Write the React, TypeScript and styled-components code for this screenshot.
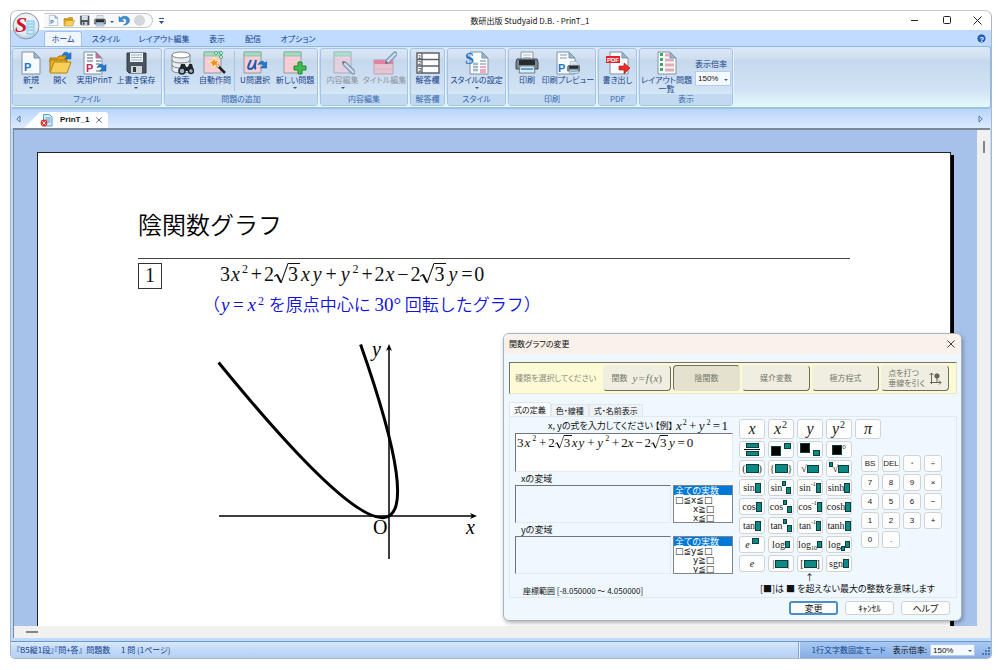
import React from "react";
import styled, { createGlobalStyle, css } from "styled-components";

const ui = `"Noto Sans CJK JP", "Liberation Sans", sans-serif`;
const serif = `"Liberation Serif", "Noto Sans CJK JP", serif`;

const GlobalStyle = createGlobalStyle`
  *, *::before, *::after { box-sizing: border-box; }
  body {
    margin: 0;
    background: #fff;
    color: #111;
    font-family: ${ui};
    font-size: 9px;
    line-height: 12px;
  }
  button, input, select, textarea { font: inherit; color: inherit; margin: 0; }
  button { padding: 0; border: 0; background: none; }
`;

/* ---------- window frame ---------- */

const Screen = styled.div`
  min-height: 100vh;
  padding: 10px 8px 11px 10px;
  display: flex;
`;

const Window = styled.div`
  position: relative;
  flex: 1;
  min-width: 0;
  display: flex;
  flex-direction: column;
  border: 1px solid #a9b6c8;
  border-top-color: #c9c9c9;
  border-radius: 7px 7px 5px 5px;
  overflow: hidden;
  background: #bfdbff;
  font-feature-settings: "palt";
`;

const TitleBar = styled.header`
  height: 19px;
  display: flex;
  align-items: center;
  justify-content: space-between;
  background: #fff;
  padding: 0 9px 0 33px;
`;

const QuickBar = styled.div`
  display: flex;
  align-items: center;
  width: 109px;
  height: 15px;
  gap: 4px;
  padding-left: 4px;
  border: 1px solid #c4c8ce;
  border-left: 0;
  border-radius: 0 8px 8px 0;
  background: #f7f9fb;
`;

const TitleSide = styled.div`
  flex: 1 0 34px;
  display: flex;
  align-items: center;
  gap: 6px;
`;

const WindowControls = styled(TitleSide)`
  flex-basis: 0;
  justify-content: flex-end;
  gap: 20px;
`;

const PlainButton = styled.button`
  display: flex;
  align-items: center;
  justify-content: center;
`;

const WindowTitle = styled.h1`
  margin: 0;
  font-size: 8px;
  line-height: 12px;
  font-weight: 400;
  color: #111;
`;

const Orb = styled.button`
  position: absolute;
  left: 1px;
  top: 1px;
  width: 28px;
  height: 28px;
  z-index: 2;
`;

const MenuBar = styled.nav`
  height: 16px;
  display: flex;
  align-items: flex-end;
  padding: 0 4px 0 33px;
  color: #15428b;
`;

const MenuTab = styled.button<{ $active?: boolean; $w: number }>`
  width: ${(p) => p.$w}px;
  height: 15px;
  font-size: 8px;
  line-height: 14px;
  color: #15428b;
  border-radius: 3px 3px 0 0;
  ${(p) =>
    p.$active &&
    css`
      background: #eff6fe;
      border: 1px solid #9fc3ee;
      border-bottom: 0;
    `}
`;

const HelpButton = styled(PlainButton)`
  margin-left: auto;
  height: 15px;
`;

/* ---------- ribbon ---------- */

const Ribbon = styled.div`
  display: flex;
  gap: 2px;
  height: 63px;
  margin-left: 1px;
  padding: 1px 0;
  border: 1px solid #8db9e8;
  border-width: 1px 1px 2px 0;
  border-bottom-color: #9cc4d8;
  border-radius: 0 3px 3px 0;
  background: linear-gradient(#dbe8f7 0, #d0dff1 11px, #c6d8ec 13px, #d0e2f4 42px, #e2f9fd 100%);
`;

const GroupBox = styled.section<{ $w: number }>`
  width: ${(p) => p.$w}px;
  display: flex;
  flex-direction: column;
  border: 1px solid #a5c3e4;
  border-radius: 3px;
  overflow: hidden;
  box-shadow: 1px 0 0 #e9f3fd;
`;

const GroupItems = styled.div`
  flex: 1;
  display: flex;
  justify-content: center;
  align-items: flex-start;
  padding-top: 2px;
`;

const GroupCaption = styled.h2`
  margin: 0;
  height: 11px;
  font-size: 8px;
  line-height: 10px;
  font-weight: 400;
  text-align: center;
  color: #3a68ae;
  background: #c1d9f1;
`;

const RibbonItem = styled.button<{ $w: number; $dim?: boolean }>`
  width: ${(p) => p.$w}px;
  display: flex;
  flex-direction: column;
  align-items: center;
  font-size: 8px;
  line-height: 9px;
  white-space: nowrap;
  color: ${(p) => (p.$dim ? "#8b939f" : "#15428b")};
  svg.icon { width: 24px; height: 24px; opacity: ${(p) => (p.$dim ? 0.7 : 1)}; }
`;

const Caret = styled.span`
  width: 0;
  height: 0;
  margin-top: 3px;
  border: 2px solid transparent;
  border-top-color: #35558c;
  border-bottom: 0;
`;

const Separator = styled.span`
  width: 1px;
  height: 40px;
  background: #eef5fd;
  border-left: 1px solid #a9c5e2;
`;

const ZoomField = styled.label`
  display: flex;
  flex-direction: column;
  gap: 1px;
  padding: 7px 0 0 3px;
  font-size: 8px;
  color: #15428b;
`;

const SelectWrap = styled.span<{ $w: number; $h: number }>`
  position: relative;
  display: block;
  width: ${(p) => p.$w}px;
  height: ${(p) => p.$h}px;
  &::after {
    content: "";
    position: absolute;
    right: 3px;
    top: 50%;
    border: 2px solid transparent;
    border-top-color: #3a63a5;
    border-bottom: 0;
  }
`;

const ZoomSelect = styled.select`
  appearance: none;
  width: 100%;
  height: 100%;
  display: block;
  padding: 0 0 0 2px;
  border: 1px solid #b3cdec;
  border-radius: 0;
  background: #f4f9ff;
  font-family: "Liberation Sans", sans-serif;
  font-size: 8px;
  color: #111;
`;

/* ---------- document tabs ---------- */

const DocTabs = styled.div`
  height: 19px;
  display: flex;
  align-items: flex-end;
  justify-content: space-between;
  padding: 0 7px 0 3px;
  background: linear-gradient(#b9d5fc, #dceafd);
`;

const DocTabGroup = styled.div`
  display: flex;
  align-items: flex-end;
`;

const Scroller = styled(PlainButton)`
  width: 8px;
  height: 18px;
`;

const DocTab = styled.div`
  width: 84px;
  height: 16px;
  margin-left: 2px;
  display: flex;
  align-items: center;
  padding: 0 5px 0 16px;
  gap: 7px;
  background: #fdfeff;
  clip-path: polygon(0 100%, 16px 0, 82px 0, 100% 2px, 100% 100%);
  font-size: 8px;
  font-weight: 700;
  font-family: "Liberation Sans", sans-serif;
`;

/* ---------- workspace ---------- */

const Workspace = styled.main`
  position: relative;
  flex: 1;
  display: grid;
  grid-template-columns: minmax(0, 1fr) 13px;
  grid-template-rows: 1fr 12px;
  margin: 0 1px 3px 2px;
  border: 1px solid #7d8795;
  border-width: 2px 0 0 1px;
`;

const Canvas = styled.div`
  display: flex;
  padding: 22px 26px 0 23px;
  background: #a6c1ea;
  overflow: hidden;
`;

const Paper = styled.article`
  flex: 1;
  min-width: 0;
  padding: 53px 100px 0 100px;
  border: 1px solid #222;
  border-bottom: 0;
  background: #fff;
  box-shadow: 3px 3px 0 #000;
`;

const VScroll = styled.div`
  background: #f0f0f0;
  padding-top: 11px;
  display: flex;
  justify-content: center;
  align-items: flex-start;
  &::before { content: ""; width: 2px; height: 12px; background: #858585; }
`;

const HScroll = styled.div`
  grid-column: 1 / -1;
  background: #f0f0f0;
  padding: 5px 12px;
  &::before { content: ""; display: block; width: 12px; height: 2px; background: #858585; }
`;

const PaperTitle = styled.h2`
  margin: 0;
  padding-bottom: 17px;
  border-bottom: 1px solid #444;
  font-size: 24px;
  line-height: 35px;
  font-weight: 350;
  color: #000;
  font-feature-settings: normal;
`;

const Problem = styled.section`
  display: flex;
  align-items: flex-start;
  padding-top: 4px;
`;

const ProblemNumber = styled.span`
  width: 24px;
  height: 26px;
  border: 1px solid #333;
  font: 20px/23px ${serif};
  text-align: center;
`;

const ProblemBody = styled.div`
  flex: 1;
  min-width: 0;
  padding-left: 58px;
`;

const Note = styled.p`
  margin: 9px 0 0 -17px;
  display: flex;
  align-items: center;
  color: #1010e0;
  font-size: 17px;
  line-height: 22px;
  white-space: pre;
  font-weight: 350;
  font-feature-settings: normal;
`;

const Graph = styled.svg`
  display: block;
  width: 262px;
  height: 228px;
  margin: 20px 0 0 -3px;
  font-family: ${serif};
`;

/* ---------- mathematics ---------- */

const MathRow = styled.span<{ $size: number }>`
  display: inline-flex;
  align-items: center;
  font-family: ${serif};
  font-size: ${(p) => p.$size}px;
  line-height: ${(p) => p.$size}px;
  font-weight: 400;
  white-space: nowrap;
`;

const Var = styled.i<{ $gap?: number }>`
  padding: 0 ${(p) => p.$gap ?? 1}px;
`;

const Sup = styled.span<{ $size: number }>`
  font-size: ${(p) => p.$size}px;
  line-height: ${(p) => p.$size}px;
  align-self: flex-start;
  font-style: normal;
  padding: 0 1px;
`;

const Op = styled.span<{ $w: number }>`
  width: ${(p) => p.$w}px;
  display: flex;
  justify-content: center;
`;

const RootBox = styled.span`
  display: inline-flex;
  align-items: stretch;
  svg { flex: none; }
`;

const Radicand = styled.span<{ $w: number }>`
  width: ${(p) => p.$w}px;
  border-top: 1px solid currentColor;
`;

const Root = ({ size, children }: { size: number; children: React.ReactNode }) => {
  const w = Math.round(size * 0.7);
  return (
    <RootBox>
      <svg width={w} height={size + 1} viewBox="0 0 14 20" preserveAspectRatio="none" fill="none" stroke="currentColor">
        <path d="M0 13 L3 11" strokeWidth="1" />
        <path d="M3 11 L7 18.5" strokeWidth="2" />
        <path d="M7 19 L14 .5" strokeWidth="1" />
      </svg>
      <Radicand $w={Math.round(size * 0.6)}>{children}</Radicand>
    </RootBox>
  );
};

const Equation = ({ size, op, gap }: { size: number; op: number; gap: number }) => {
  const sup = Math.round(size * 0.6);
  return (
    <MathRow $size={size}>
      3<Var>x</Var>
      <Sup $size={sup}>2</Sup>
      <Op $w={op}>+</Op>2<Root size={size}>3</Root>
      <Var $gap={gap - 1}>x</Var>
      <Var $gap={gap}>y</Var>
      <Op $w={op}>+</Op>
      <Var $gap={gap}>y</Var>
      <Sup $size={sup}>2</Sup>
      <Op $w={op}>+</Op>2<Var $gap={gap - 1}>x</Var>
      <Op $w={op}>−</Op>2<Root size={size}>3</Root>
      <Var $gap={gap}>y</Var>
      <Op $w={op}>=</Op>0
    </MathRow>
  );
};

/* ---------- dialog ---------- */

const Dialog = styled.section`
  position: absolute;
  right: 28px;
  bottom: 17px;
  width: 459px;
  border: 1px solid #a9b4c2;
  border-radius: 6px;
  background: #f0f8ff;
  box-shadow: 1px 2px 4px rgba(0, 0, 0, 0.3);
  padding-bottom: 5px;
  overflow: hidden;
  color: #111;
`;

const DialogHead = styled.header`
  display: flex;
  align-items: center;
  justify-content: space-between;
  height: 20px;
  padding: 0 6px 0 5px;
  background: #faf1ea;
`;

const DialogTitle = styled.h2`
  margin: 0;
  font-size: 8px;
  line-height: 12px;
  font-weight: 400;
`;

const ModeBar = styled.div`
  display: flex;
  align-items: center;
  gap: 2px;
  height: 32px;
  margin: 8px 4px 0 5px;
  padding: 0 7px 0 5px;
  border: 1px solid #e9e7c8;
  border-top: 1px solid #73736b;
  border-left: 1px solid #73736b;
  background: #fdfbd6;
  color: #8c8c80;
`;

const ModeLabel = styled.span`
  width: 86px;
  font-size: 8px;
  white-space: nowrap;
`;

const ModeButton = styled.button<{ $on?: boolean }>`
  flex: 1;
  height: 26px;
  display: flex;
  align-items: center;
  justify-content: center;
  gap: 4px;
  border-radius: 4px;
  font-size: 8px;
  line-height: 10px;
  text-align: left;
  white-space: nowrap;
  color: #77776c;
  background: ${(p) => (p.$on ? "#e4e2cf" : "#efeee0")};
  border: 1px solid ${(p) => (p.$on ? "#e4e2cf" : "#efeee0")};
  ${(p) =>
    p.$on
      ? css`
          border-top-color: #6d6d62;
          border-left-color: #6d6d62;
        `
      : css`
          border-bottom-color: #6d6d62;
          border-right-color: #6d6d62;
        `}
`;

const TwoLines = styled.span`
  display: flex;
  flex-direction: column;
`;

const DialogTabs = styled.div`
  display: flex;
  align-items: flex-end;
  height: 14px;
  margin: 8px 0 0 5px;
`;

const DialogTab = styled.button<{ $on?: boolean }>`
  height: ${(p) => (p.$on ? 14 : 12)}px;
  padding: 0 4px;
  font-size: 8px;
  line-height: 12px;
  background: ${(p) => (p.$on ? "#fafdff" : "#eef3f7")};
  border: 1px solid #e2e6e9;
  border-bottom: 0;
`;

const Panel = styled.div`
  display: flex;
  gap: 6px;
  height: 182px;
  margin: 0 4px 0 5px;
  padding: 1px 4px 0 5px;
  border: 1px solid #e2e8ec;
`;

const Fields = styled.div`
  width: 218px;
  display: flex;
  flex-direction: column;
`;

const Hint = styled.div`
  display: flex;
  align-items: center;
  justify-content: flex-end;
  gap: 3px;
  height: 15px;
  padding-right: 5px;
  white-space: nowrap;
`;

const sunken = css`
  border: 1px solid #e6eaee;
  border-top-color: #6e757c;
  border-left-color: #6e757c;
`;

const FormulaBox = styled.div`
  height: 39px;
  padding: 1px 0 0 1px;
  background: #fff;
  ${sunken}
`;

const FieldLabel = styled.label`
  height: 13px;
  padding-left: 6px;
  line-height: 13px;
`;

const FieldRow = styled.div`
  display: flex;
  gap: 2px;
  height: 38px;
`;

const DomainText = styled.textarea`
  flex: 1;
  min-width: 0;
  resize: none;
  padding: 2px;
  border-radius: 0;
  background: #f0f8ff;
  outline: 0;
  ${sunken}
`;

const DomainList = styled.select`
  width: 60px;
  height: 38px;
  padding: 0;
  border: 1px solid #7d858d;
  border-radius: 0;
  background: #fff;
  overflow: hidden;
  outline: 0;
  color: #111;
  option {
    display: flex;
    align-items: center;
    min-height: 9px;
    height: 9px;
    padding: 0 1px;
    font-family: "DejaVu Sans", "Noto Sans CJK JP", sans-serif;
    font-size: 9px;
    line-height: 9px;
    white-space: pre;
  }
  option:checked {
    color: #fff;
    background: #0078d7 linear-gradient(#0078d7, #0078d7);
  }
`;

const Range = styled.p`
  margin: 11px 0 0 8px;
  font-size: 8px;
`;

const KeySide = styled.div`
  flex: 1;
  display: flex;
  flex-direction: column;
`;

const KeyPads = styled.div`
  display: flex;
  gap: 3px;
  padding-top: 1px;
`;

const FnPad = styled.div`
  display: grid;
  grid-template-columns: repeat(4, 26px);
  grid-template-rows: 20px repeat(7, 17px);
  gap: 2px 3px;
`;

const RightPad = styled.div`
  display: flex;
  flex-direction: column;
  gap: 16px;
`;

const NumPad = styled.div`
  display: grid;
  grid-template-columns: repeat(4, 18px);
  grid-auto-rows: 17px;
  gap: 2px 3px;
  padding-left: 6px;
`;

const keyFace = css`
  border: 1px solid #cfd3d6;
  border-radius: 3px;
  background: #fdfdfd;
  color: #1a1a1a;
`;

const Key = styled.button<{ $big?: boolean }>`
  ${keyFace}
  display: flex;
  align-items: center;
  justify-content: center;
  width: ${(p) => (p.$big ? "26px" : "auto")};
  height: ${(p) => (p.$big ? "20px" : "auto")};
  font-family: ${serif};
  font-size: ${(p) => (p.$big ? 16 : 10)}px;
  line-height: ${(p) => (p.$big ? 16 : 12)}px;
`;

const NumKey = styled.button`
  ${keyFace}
  font-family: "Liberation Sans", sans-serif;
  font-size: 8px;
  line-height: 12px;
`;

type SlotProps = { $w: number; $h: number; $pos?: "flex-start" | "center" | "flex-end"; $dark?: boolean };
const Slot = styled.span<SlotProps>`
  flex: none;
  width: ${(p) => p.$w}px;
  height: ${(p) => p.$h}px;
  align-self: ${(p) => p.$pos ?? "center"};
  border: 1px solid #0a3f3c;
  background: ${(p) => (p.$dark ? "#000" : "#0e8a84")};
`;

const Pair = styled.span<{ $gap?: number }>`
  display: flex;
  align-items: center;
  gap: ${(p) => p.$gap ?? 0}px;
  height: 13px;
`;

const Fraction = styled.span`
  display: flex;
  flex-direction: column;
  align-items: center;
  gap: 1px;
  hr { width: 16px; height: 1px; margin: 0; border: 0; background: #111; }
`;

const Tiny = styled.span<{ $pos: "flex-start" | "flex-end" }>`
  font-size: 6px;
  line-height: 6px;
  align-self: ${(p) => p.$pos};
`;

const KeyNote = styled.p`
  margin: 0;
  padding-left: 21px;
  font-size: 9px;
  line-height: 11px;
  white-space: nowrap;
`;

const Arrow = styled.span`
  display: block;
  padding-left: 45px;
  line-height: 11px;
`;

const Actions = styled.footer`
  display: flex;
  justify-content: flex-end;
  gap: 7px;
  padding: 3px 11px 0 0;
`;

const ActionButton = styled.button<{ $primary?: boolean }>`
  width: 49px;
  height: 14px;
  font-size: 9px;
  line-height: 11px;
  border: 1px solid #cfd3d6;
  border-radius: 3px;
  background: #fdfdfd;
  ${(p) =>
    p.$primary &&
    css`
      border: 2px solid #4a8fc7;
      line-height: 9px;
    `}
`;

/* ---------- status bar ---------- */

const StatusBar = styled.footer`
  height: 17px;
  display: flex;
  align-items: center;
  justify-content: space-between;
  padding-left: 5px;
  border-top: 1px solid #6b95cd;
  background: linear-gradient(#dbe9fb, #c3daf8 45%, #b5d1f5);
  color: #15428b;
  font-size: 8px;
  white-space: pre;
`;

const StatusRight = styled.div`
  align-self: stretch;
  display: flex;
  align-items: center;
  gap: 7px;
  padding: 0 1px 0 12px;
  border-left: 1px solid #e8f2ff;
  box-shadow: -1px 0 0 #7ea5d8;
  background: linear-gradient(#a9c9f3, #85aee4);
`;

const StatusZoom = styled.label`
  display: flex;
  align-items: center;
  gap: 3px;
  color: #111;
`;

/* ---------- icons ---------- */

const Ico = ({ children }: { children: React.ReactNode }) => (
  <svg className="icon" viewBox="0 0 24 24" fill="none" aria-hidden="true">
    {children}
  </svg>
);

const Sheet = ({ x = 3, fold = "#8bb9d6" }: { x?: number; fold?: string }) => (
  <g transform={`translate(${x} 1)`}>
    <path d="M0 0h12l6 6v16H0z" fill="#f8fbfd" stroke="#7d93a6" />
    <path d="M12 0v6h6z" fill={fold} stroke="#7d93a6" />
  </g>
);

const BigP = ({ x, y, color }: { x: number; y: number; color: string }) => (
  <text x={x} y={y} fontFamily="Liberation Sans, sans-serif" fontWeight="700" fontSize="11" fill={color}>P</text>
);

const CurveArrow = ({ x, y }: { x: number; y: number }) => (
  <path
    transform={`translate(${x} ${y})`}
    d="M0 5C1 1 5 0 7 3L9 1.500V8H2.500L5 5.500C4 3.500 2 3.500 0 5z"
    fill="#2679cc"
    stroke="#15529c"
    strokeWidth=".5"
  />
);

const Folder = () => (
  <>
    <path d="M2 7h7l2-2h8v6H2z" fill="#e2a81c" stroke="#a8780d" />
    <path d="M2 21V9h16v3" fill="#e9b32c" stroke="#a8780d" />
    <path d="M2 22l4-11h17l-4 11z" fill="#f8cf58" stroke="#b5840f" />
  </>
);

const Disk = () => (
  <>
    <path d="M3 2h19v20H5l-2-2z" fill="#4a545c" stroke="#333b42" />
    <path d="M6 2h13v9H6z" fill="#eef4f8" />
    <path d="M7 4h11M7 6.500h11M7 9h11" stroke="#9cb4c6" />
    <path d="M7 15h11v7H7z" fill="#cfd6da" />
    <path d="M9 16h3v5H9z" fill="#333b42" />
  </>
);

const PrinterShape = () => (
  <>
    <path d="M6 1h12v8H6z" fill="#f7fafc" stroke="#8595a2" />
    <path d="M8 4h8M8 6.500h8" stroke="#a9bccb" />
    <path d="M2 8h20l1 3v7H1v-7z" fill="#7d8790" stroke="#3d464d" />
    <path d="M4 9h16v5H4z" fill="#252c32" />
    <path d="M5 15h14l1 7H4z" fill="#dfe9f1" stroke="#6f8595" />
    <path d="M6 18h12" stroke="#5aa5cf" strokeWidth="2" />
  </>
);

const NotePage = ({ x = 3, w = 18, dim }: { x?: number; w?: number; dim?: boolean }) => (
  <g>
    <path d={`M${x} 1h${w}v21H${x}z`} fill={dim ? "#f0cddb" : "#f7cfd6"} stroke="#8c9aa0" />
    <path d={`M${x} 1h${w}v4H${x}z`} fill="#9fdcc0" stroke="#7fae9b" strokeWidth=".6" />
    <path d={`M${x} 9h${w}M${x} 13h${w}M${x} 17h${w}`} stroke="#efbfc9" strokeWidth=".7" />
  </g>
);

const Pencil = ({ d }: { d: string }) => (
  <g strokeLinecap="round">
    <path d={d} stroke="#587493" strokeWidth="5" />
    <path d={d} stroke="#a8c6e3" strokeWidth="3" />
    <path d={d} stroke="#e9f3fb" strokeWidth="1" />
  </g>
);

const icons: Record<string, React.ReactNode> = {
  create: <Ico><Sheet /><BigP x={5} y={20} color="#1b78c8" /></Ico>,
  open: <Ico><Folder /><CurveArrow x={14} y={0} /></Ico>,
  practice: (
    <Ico>
      <Sheet x={1} fold="#ef5b87" />
      <path d="M4 4h6M4 7h6M4 10h6M13 10h5M13 13h4M13 20h5" stroke="#8e9aa3" strokeWidth="1.500" />
      <BigP x={3} y={21} color="#c8285c" />
      <CurveArrow x={14} y={12} />
    </Ico>
  ),
  save: <Ico><Disk /></Ico>,
  search: (
    <Ico>
      <path d="M2 4v15c0 4 18 4 18 0V4" fill="#e9edf0" stroke="#7c868d" />
      <ellipse cx="11" cy="4" rx="9" ry="3" fill="#fff" stroke="#7c868d" />
      <path d="M2 9c0 4 18 4 18 0M2 14c0 4 18 4 18 0" stroke="#7c868d" />
      <path d="M11 13h4l1 3h2l1-3h3l2 7H9z" fill="#20262b" />
      <circle cx="12" cy="20" r="3" fill="#9bb6ca" stroke="#20262b" strokeWidth="1.500" />
      <circle cx="21" cy="20" r="2.500" fill="#9bb6ca" stroke="#20262b" strokeWidth="1.500" />
    </Ico>
  ),
  auto: (
    <Ico>
      <NotePage x={1} w={17} />
      <path d="M13 13l9 9" stroke="#222" strokeWidth="2.500" />
      <path d="M11 6l1.500 4 4-1-2.500 3 2 4-4-2-3 3v-4l-4-2 4.500-1z" fill="#f58a1f" stroke="#fff3b0" />
      <circle cx="13" cy="2" r="1.500" fill="#fff" stroke="#37a86d" />
      <circle cx="18" cy="2" r="1.500" fill="#fff" stroke="#37a86d" />
      <circle cx="18" cy="6" r="1.500" fill="#fff" stroke="#37a86d" />
    </Ico>
  ),
  select: (
    <Ico>
      <NotePage x={1} w={17} />
      <path d="M8 9c-3 6-4 9-1 9s5-4 6-9c-1 5-2 8 0 9" stroke="#1c5db3" strokeWidth="2" />
      <CurveArrow x={15} y={9} />
    </Ico>
  ),
  add: (
    <Ico>
      <NotePage x={1} w={17} />
      <path d="M15 11h4v4h4v4h-4v4h-4v-4h-4v-4h4z" fill="#3fbf4a" stroke="#24853a" />
    </Ico>
  ),
  edit: <Ico><NotePage dim w={17} /><Pencil d="M14 13L22 21" /><path d="M11 10l3 1-2 2z" fill="#333" /></Ico>,
  titleEdit: (
    <Ico>
      <path d="M1 9h19v14H1z" fill="#f5bccb" stroke="#b78c99" />
      <path d="M1 9h19v4H1z" fill="#ee5e86" />
      <path d="M1 18h19" stroke="#dfa0b0" />
      <Pencil d="M22 3L15 10" /><path d="M12 13l1-3 2 2z" fill="#333" />
    </Ico>
  ),
  answers: (
    <Ico>
      <path d="M1 2h22v20H1z" fill="#fdfdfd" stroke="#5c6368" strokeWidth="1.500" />
      <path d="M6 2v20M1 8.500h22M1 15h22" stroke="#5c6368" strokeWidth="1.300" />
      <g fontFamily="Liberation Sans, sans-serif" fontSize="6" fill="#222">
        <text x="2" y="7.500">1</text><text x="2" y="14">2</text><text x="2" y="21">3</text>
      </g>
    </Ico>
  ),
  style: (
    <Ico>
      <Sheet x={5} />
      <path d="M8 11h5v10H8z" fill="#dfe8ee" />
      <path d="M8 13h5M8 16h5M8 19h5M15 10h6M15 13h6" stroke="#70899b" />
      <path d="M15 16h6M15 19h6M15 21h6" stroke="#e5587c" />
      <text x="0" y="13" fontFamily="Liberation Serif, serif" fontWeight="700" fontSize="16" fill="#1b78c8">S</text>
    </Ico>
  ),
  print: <Ico><PrinterShape /></Ico>,
  preview: (
    <Ico>
      <Sheet x={1} /><path d="M4 4h7M4 7h7" stroke="#8e9aa3" />
      <BigP x={2} y={21} color="#1b78c8" />
      <g transform="translate(11 10) scale(.56)"><PrinterShape /></g>
    </Ico>
  ),
  pdf: (
    <Ico>
      <Sheet x={4} />
      <path d="M0 5h14v7H0z" fill="#e1262b" />
      <text x="1" y="11" fontFamily="Liberation Sans, sans-serif" fontWeight="700" fontSize="6" fill="#fff">PDF</text>
      <path d="M13 15h5v-3l6 5-6 6v-4h-5z" fill="#ea2f28" stroke="#a31414" strokeWidth=".6" />
    </Ico>
  ),
  layout: (
    <Ico>
      <Sheet />
      <path d="M5 3.500h3M5 8.500h3M5 13.500h3M5 18.500h3" stroke="#43a765" strokeWidth="3" />
      <path d="M10 4h5M10 9h9M10 14h9M10 19h9" stroke="#e4aab5" strokeWidth="3" />
    </Ico>
  ),
};

const Small = ({ size = 11, children }: { size?: number; children: React.ReactNode }) => (
  <svg width={size} height={size} viewBox="0 0 24 24" fill="none" aria-hidden="true">{children}</svg>
);

/* ---------- data ---------- */

type Item = { icon: string; label: string; w: number; menu?: boolean; dim?: boolean; split?: boolean };
const groups: { name: string; w: number; items: Item[] }[] = [
  { name: "ファイル", w: 150, items: [
    { icon: "create", label: "新規", w: 29, menu: true },
    { icon: "open", label: "開く", w: 29 },
    { icon: "practice", label: "実用PrinT", w: 40 },
    { icon: "save", label: "上書き保存", w: 43, menu: true },
  ] },
  { name: "問題の追加", w: 154, items: [
    { icon: "search", label: "検索", w: 29 },
    { icon: "auto", label: "自動作問", w: 38 },
    { icon: "select", label: "U問選択", w: 40, split: true },
    { icon: "add", label: "新しい問題", w: 40, menu: true },
  ] },
  { name: "内容編集", w: 88, items: [
    { icon: "edit", label: "内容編集", w: 41, menu: true, dim: true },
    { icon: "titleEdit", label: "タイトル編集", w: 43, dim: true },
  ] },
  { name: "解答欄", w: 35, items: [{ icon: "answers", label: "解答欄", w: 33 }] },
  { name: "スタイル", w: 59, items: [{ icon: "style", label: "スタイルの設定", w: 57, menu: true }] },
  { name: "印刷", w: 88, items: [
    { icon: "print", label: "印刷", w: 32 },
    { icon: "preview", label: "印刷プレビュー", w: 50 },
  ] },
  { name: "PDF", w: 39, items: [{ icon: "pdf", label: "書き出し", w: 37 }] },
];

const menus: [string, number][] = [
  ["ホーム", 38], ["スタイル", 48], ["レイアウト編集", 68], ["表示", 38], ["配信", 34], ["オプション", 56],
];

const numKeys = ["BS", "DEL", "・", "÷", "7", "8", "9", "×", "4", "5", "6", "−", "1", "2", "3", "+", "0", "."];

const trigKeys = ["sin", "cos", "tan"].flatMap((f) => [
  <Key key={f}>{f}<Slot $w={6} $h={10} /></Key>,
  <Key key={f + "n"}><Pair>{f}<Slot $w={4} $h={5} $pos="flex-start" /><Slot $w={5} $h={7} $pos="flex-end" /></Pair></Key>,
  <Key key={f + "inv"}><Pair>{f}<Tiny $pos="flex-start">-1</Tiny><Slot $w={5} $h={10} /></Pair></Key>,
  <Key key={f + "h"}>{f}h<Slot $w={6} $h={10} /></Key>,
]);

/* plot of the parabola y = x² turned by 30° about the origin */
const unit = 23;
const origin = { x: 172, y: 175 };
const turn = (u: number, v: number) => {
  const c = Math.cos(Math.PI / 6);
  const s = Math.sin(Math.PI / 6);
  return `${(origin.x + unit * (u * c - v * s)).toFixed(1)} ${(origin.y - unit * (u * s + v * c)).toFixed(1)}`;
};
const from = -3.08;
const to = 2.66;
const curve = `M${turn(from, from * from)} Q${turn((from + to) / 2, from * to)} ${turn(to, to * to)}`;

const Cross = ({ size = 9 }: { size?: number }) => (
  <svg width={size} height={size} viewBox="0 0 9 9" stroke="#222" strokeWidth="1" aria-hidden="true">
    <path d="M.5.5l8 8M8.500.5l-8 8" />
  </svg>
);

const Domain = ({ v }: { v: string }) => (
  <>
    <FieldLabel htmlFor={`domain-${v}`}>{v}の変域</FieldLabel>
    <FieldRow>
      <DomainText id={`domain-${v}`} />
      <DomainList size={4} defaultValue="all" aria-label={`${v}の変域`}>
        <option value="all">全ての実数</option>
        <option value="both">{`□≦${v}≦□`}</option>
        <option value="min">{`\u3000\u3000${v}≧□`}</option>
        <option value="max">{`\u3000\u3000${v}≦□`}</option>
      </DomainList>
    </FieldRow>
  </>
);

export default function App() {
  return (
    <Screen>
      <GlobalStyle />
      <Window>
        <Orb aria-label="メニュー">
          <svg width="28" height="28" viewBox="0 0 28 28" aria-hidden="true">
            <defs>
              <radialGradient id="orb" cx=".5" cy=".35" r=".7">
                <stop offset="0" stopColor="#fff" />
                <stop offset=".7" stopColor="#dfe8f1" />
                <stop offset="1" stopColor="#9fb3c8" />
              </radialGradient>
            </defs>
            <circle cx="14" cy="14" r="13" fill="url(#orb)" stroke="#8798aa" />
            <path d="M15 9h7v13h-7z" fill="#c9ecfa" stroke="#79c1e0" />
            <path d="M16 12h5M16 15h5M16 18h5" stroke="#79c1e0" />
            <text x="3" y="20" fontFamily="Liberation Serif, serif" fontWeight="700" fontStyle="italic" fontSize="22" fill="#d0132b">S</text>
          </svg>
        </Orb>
        <TitleBar>
          <TitleSide>
            <QuickBar>
              <PlainButton aria-label="新規"><Small><Sheet /><BigP x={5} y={20} color="#1b78c8" /></Small></PlainButton>
              <PlainButton aria-label="開く"><Small size={12}><Folder /></Small></PlainButton>
              <PlainButton aria-label="保存"><Small><Disk /></Small></PlainButton>
              <PlainButton aria-label="印刷"><Small size={12}><PrinterShape /></Small></PlainButton>
              <Caret />
              <PlainButton aria-label="元に戻す">
                <Small size={12}><path d="M2 3v10h10l-4-4c4-4 10-1 9 5-1 3-3 5-6 6 7 0 12-4 12-9C23 2 11 0 5 6z" fill="#3d8ed8" stroke="#1c64a8" /></Small>
              </PlainButton>
              <PlainButton aria-label="やり直し"><Small><circle cx="12" cy="12" r="11" fill="#d5d8da" stroke="#bfc4c7" /></Small></PlainButton>
            </QuickBar>
            <PlainButton aria-label="カスタマイズ">
              <svg width="5" height="6" viewBox="0 0 5 6" aria-hidden="true"><path d="M0 0h5v1H0zM0 3h5L2.500 6z" fill="#2d4f8a" /></svg>
            </PlainButton>
          </TitleSide>
          <WindowTitle>数研出版 Studyaid D.B. - PrinT_1</WindowTitle>
          <WindowControls>
            <PlainButton aria-label="最小化"><svg width="12" height="9" stroke="#222"><path d="M2 4.500h7" /></svg></PlainButton>
            <PlainButton aria-label="最大化"><svg width="12" height="9" fill="none" stroke="#222"><rect x="2.500" y=".5" width="7" height="7" rx="1" /></svg></PlainButton>
            <PlainButton aria-label="閉じる"><Cross /></PlainButton>
          </WindowControls>
        </TitleBar>

        <MenuBar>
          {menus.map(([name, w], i) => <MenuTab key={name} $w={w} $active={i === 0}>{name}</MenuTab>)}
          <HelpButton aria-label="ヘルプ">
            <svg width="11" height="11" viewBox="0 0 11 11" aria-hidden="true">
              <circle cx="5.500" cy="5.500" r="4.700" fill="#1f5fbd" stroke="#e7effa" />
              <text x="3.300" y="8.500" fontFamily="Liberation Sans, sans-serif" fontWeight="700" fontSize="8" fill="#fff">?</text>
            </svg>
          </HelpButton>
        </MenuBar>

        <Ribbon>
          {groups.map((g) => (
            <GroupBox key={g.name} $w={g.w}>
              <GroupItems>
                {g.items.map((it) => (
                  <React.Fragment key={it.label}>
                    {it.split && <Separator />}
                    <RibbonItem $w={it.w} $dim={it.dim}>
                      {icons[it.icon]}
                      {it.label}
                      {it.menu && <Caret />}
                    </RibbonItem>
                  </React.Fragment>
                ))}
              </GroupItems>
              <GroupCaption>{g.name}</GroupCaption>
            </GroupBox>
          ))}
          <GroupBox $w={94}>
            <GroupItems>
              <RibbonItem $w={51}>{icons.layout}<span>レイアウト問題<br />一覧</span></RibbonItem>
              <ZoomField>
                表示倍率
                <SelectWrap $w={36} $h={15}>
                  <ZoomSelect defaultValue="150%"><option>150%</option></ZoomSelect>
                </SelectWrap>
              </ZoomField>
            </GroupItems>
            <GroupCaption>表示</GroupCaption>
          </GroupBox>
        </Ribbon>

        <DocTabs>
          <DocTabGroup>
            <Scroller aria-label="前のタブ"><svg width="5" height="8" fill="none" stroke="#5878a8"><path d="M4 1v6L.8 4z" /></svg></Scroller>
            <DocTab>
              <svg width="13" height="13" viewBox="0 0 12 13" aria-hidden="true">
                <path d="M3 .5h6l2.500 2.500v9H3z" fill="#d5eafa" stroke="#5a9fd2" />
                <path d="M5 4h5M5 6h5M5 8h5" stroke="#5a9fd2" />
                <circle cx="3.500" cy="9" r="3.400" fill="#de3535" />
                <path d="M2 7.500l3 3M5 7.500l-3 3" stroke="#fff" />
              </svg>
              PrinT_1
              <PlainButton aria-label="タブを閉じる"><Cross size={6} /></PlainButton>
            </DocTab>
          </DocTabGroup>
          <Scroller aria-label="次のタブ"><svg width="5" height="8" fill="none" stroke="#5878a8"><path d="M1 1v6l3.200-3z" /></svg></Scroller>
        </DocTabs>

        <Workspace>
          <Canvas>
            <Paper>
              <PaperTitle>陰関数グラフ</PaperTitle>
              <Problem>
                <ProblemNumber>1</ProblemNumber>
                <ProblemBody>
                  <Equation size={20} op={15} gap={2} />
                  <Note>
                    （<MathRow $size={19}><Var>y</Var><Op $w={16}>=</Op><Var>x</Var><Sup $size={12}>2</Sup></MathRow> を原点中心に <MathRow $size={19}>30°</MathRow> 回転したグラフ）
                  </Note>
                  <Graph viewBox="0 -6 262 228" role="img" aria-label="陰関数グラフ">
                    <path d="M2 175H256M172 218V8" stroke="#000" strokeWidth="1.500" />
                    <path d="M260 175l-7-3 2 3-2 3zM172 3l-3 7 3-2 3 2z" fill="#000" />
                    <path d={curve} fill="none" stroke="#000" strokeWidth="3" />
                    <text x="155" y="15" fontStyle="italic" fontSize="20">y</text>
                    <text x="249" y="193" fontStyle="italic" fontSize="20">x</text>
                    <text x="156" y="193" fontSize="20">O</text>
                  </Graph>
                </ProblemBody>
              </Problem>
            </Paper>
          </Canvas>
          <VScroll />
          <HScroll />

          <Dialog role="dialog" aria-labelledby="dialog-title">
            <DialogHead>
              <DialogTitle id="dialog-title">関数グラフの変更</DialogTitle>
              <PlainButton aria-label="閉じる"><Cross size={8} /></PlainButton>
            </DialogHead>
            <ModeBar>
              <ModeLabel>種類を選択してください</ModeLabel>
              <ModeButton>関数 <MathRow $size={11}><Var>y</Var>=<Var>f</Var>(<i>x</i>)</MathRow></ModeButton>
              <ModeButton $on>陰関数</ModeButton>
              <ModeButton>媒介変数</ModeButton>
              <ModeButton>極方程式</ModeButton>
              <ModeButton>
                <TwoLines><span>点を打つ</span><span>垂線を引く</span></TwoLines>
                <svg width="13" height="13" viewBox="0 0 13 13" fill="none" stroke="#66665c" aria-hidden="true">
                  <path d="M2.500 1v11M.5 3l2-2 2 2M1 10.500h11M10 8.500l2 2-2 2M8 5v5" />
                  <circle cx="8" cy="4" r="2.200" fill="#66665c" />
                </svg>
              </ModeButton>
            </ModeBar>
            <DialogTabs>
              <DialogTab $on>式の定義</DialogTab>
              <DialogTab>色・線種</DialogTab>
              <DialogTab>式・名前表示</DialogTab>
            </DialogTabs>
            <Panel>
              <Fields>
                <Hint>
                  <span id="formula-hint">x, yの式を入力してください 【例】</span>
                  <MathRow $size={13}>
                    <Var $gap={0}>x</Var><Sup $size={8}>2</Sup><Op $w={10}>+</Op><Var>y</Var><Sup $size={8}>2</Sup><Op $w={10}>=</Op>1
                  </MathRow>
                </Hint>
                <FormulaBox role="textbox" tabIndex={0} aria-labelledby="formula-hint"><Equation size={13} op={11} gap={1} /></FormulaBox>
                <Domain v="x" />
                <Domain v="y" />
                <Range>座標範囲 [-8.050000 ～ 4.050000]</Range>
              </Fields>
              <KeySide>
                <KeyPads>
                  <FnPad>
                    <Key $big><i>x</i></Key>
                    <Key $big><i>x</i><Sup $size={10}>2</Sup></Key>
                    <Key $big><i>y</i></Key>
                    <Key $big><i>y</i><Sup $size={10}>2</Sup></Key>
                    <Key aria-label="分数"><Fraction><Slot $w={13} $h={5} /><hr /><Slot $w={13} $h={5} /></Fraction></Key>
                    <Key aria-label="指数"><Pair $gap={3}><Slot $w={10} $h={10} $dark $pos="flex-end" /><Slot $w={7} $h={6} $pos="flex-start" /></Pair></Key>
                    <Key aria-label="添字"><Pair $gap={3}><Slot $w={10} $h={10} $dark $pos="flex-start" /><Slot $w={7} $h={6} $pos="flex-end" /></Pair></Key>
                    <Key aria-label="度"><Pair><Slot $w={10} $h={10} $dark />°</Pair></Key>
                    <Key>(<Slot $w={13} $h={9} />)</Key>
                    <Key>{"{"}<Slot $w={13} $h={9} />{"}"}</Key>
                    <Key>√<Slot $w={12} $h={8} /></Key>
                    <Key><Pair><Slot $w={4} $h={5} $pos="flex-start" />√<Slot $w={11} $h={8} /></Pair></Key>
                    {trigKeys}
                    <Key><Pair $gap={2}><i>e</i><Slot $w={7} $h={6} $pos="flex-start" /></Pair></Key>
                    <Key>log<Slot $w={5} $h={7} /></Key>
                    <Key><Pair>log<Tiny $pos="flex-end">10</Tiny><Slot $w={5} $h={7} /></Pair></Key>
                    <Key><Pair>log<Slot $w={4} $h={5} $pos="flex-end" /><Slot $w={5} $h={7} /></Pair></Key>
                    <Key><i>e</i></Key>
                    <Key>|<Slot $w={13} $h={8} />|</Key>
                    <Key>[<Slot $w={13} $h={8} />]</Key>
                    <Key>sgn<Slot $w={6} $h={9} /></Key>
                  </FnPad>
                  <RightPad>
                    <Key $big><i>π</i></Key>
                    <NumPad>{numKeys.map((k) => <NumKey key={k}>{k}</NumKey>)}</NumPad>
                  </RightPad>
                </KeyPads>
                <KeyNote><Arrow>↑</Arrow>[■]は ■ を超えない最大の整数を意味します</KeyNote>
              </KeySide>
            </Panel>
            <Actions>
              <ActionButton $primary>変更</ActionButton>
              <ActionButton>ｷｬﾝｾﾙ</ActionButton>
              <ActionButton>ヘルプ</ActionButton>
            </Actions>
          </Dialog>
        </Workspace>

        <StatusBar>
          <span>『B5縦1段』『問+答』  問題数      1 問 (1ページ)</span>
          <StatusRight>
            <span>1行文字数固定モード</span>
            <StatusZoom>
              表示倍率:
              <SelectWrap $w={45} $h={12}>
                <ZoomSelect defaultValue="150%"><option>150%</option></ZoomSelect>
              </SelectWrap>
            </StatusZoom>
            <svg width="8" height="10" viewBox="0 0 8 10" fill="#4f75ac" aria-hidden="true">
              <path d="M6 2h2v2H6zM3 5h2v2H3zM6 5h2v2H6zM0 8h2v2H0zM3 8h2v2H3zM6 8h2v2H6z" />
            </svg>
          </StatusRight>
        </StatusBar>
      </Window>
    </Screen>
  );
}
